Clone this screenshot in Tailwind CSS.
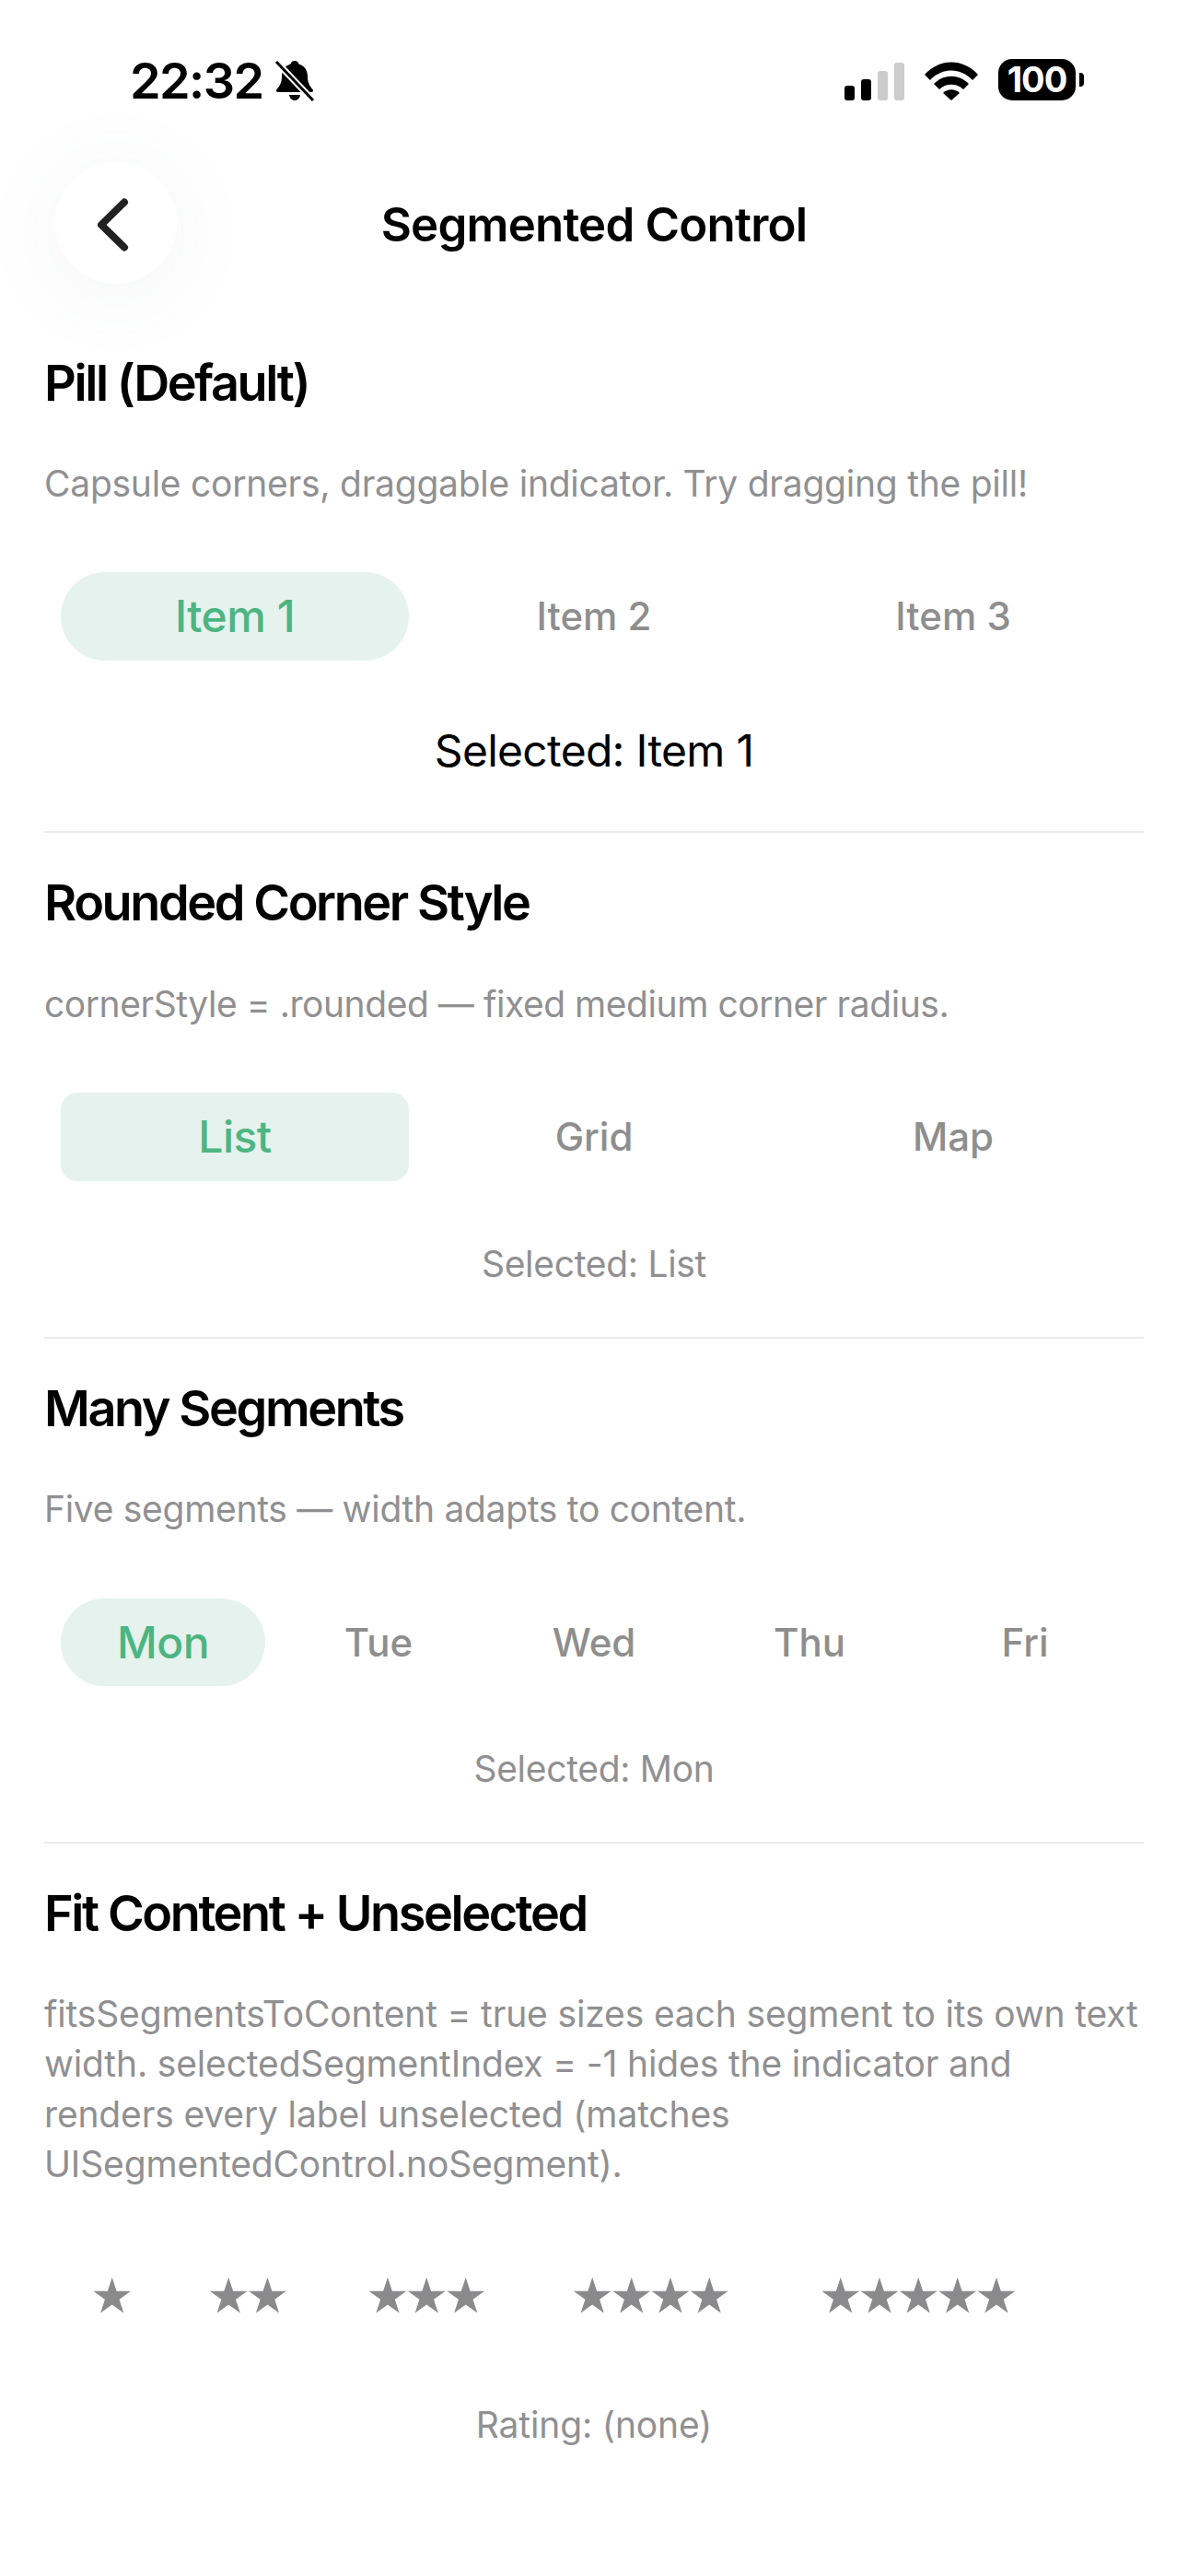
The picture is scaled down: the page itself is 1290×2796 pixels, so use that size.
<!DOCTYPE html>
<html lang="en">
<head>
  <meta charset="UTF-8" />
  <title>Segmented Control</title>
  <meta name="viewport" content="width=device-width, initial-scale=1.0"/>
  <script src="https://cdn.jsdelivr.net/npm/@tailwindcss/browser@4"></script>
</head>
<body class="bg-white text-black font-['Inter','Liberation_Sans',sans-serif] w-[1290px] h-[2796px] overflow-hidden">
  <!-- status bar -->
  <div class="h-[176px] relative">
    <div class="flex items-start justify-between pl-[141px] pr-[113px] pt-[56px]">
      <div class="flex items-center gap-[12px] h-[64px]">
        <span class="text-[54px] leading-[64px] font-semibold tracking-[-1.6px]">22:32</span>
        <svg class="w-[44px] h-[46px]" viewBox="0 0 44 46">
          <path d="M22 1c2.500 0 4 1.800 4.500 3.500C33 6.500 36 11.500 36 18c0 7 2.500 10.500 5.500 14 1 1.200.500 3-1.500 3H4c-2 0-2.500-1.800-1.500-3C5.500 28.500 8 25 8 18c0-6.500 3-11.500 9.500-13.500C18 2.800 19.500 1 22 1z" />
          <path d="M16 38h12c-.5 3.500-3 6-6 6s-5.500-2.500-6-6z" />
          <path d="M2 2l40 42" stroke="#fff" stroke-width="7" />
          <path d="M2 2l40 42" stroke="#000" stroke-width="3" />
        </svg>
      </div>
      <div class="flex items-end gap-[22px] pt-[8px]">
        <div class="flex items-end gap-[7px] h-[41px]">
          <div class="w-[11px] h-[16px] rounded-[3px] bg-black"></div>
          <div class="w-[11px] h-[23px] rounded-[3px] bg-black"></div>
          <div class="w-[11px] h-[32px] rounded-[3px] bg-[#cccccc]"></div>
          <div class="w-[11px] h-[41px] rounded-[3px] bg-[#cccccc]"></div>
        </div>
        <svg class="w-[58px] h-[42px]" viewBox="0 0 58 42">
          <path d="M0 14C16-4 42-4 58 14l-6 6C39 6 19 6 6 20z" />
          <path d="M10 24c11-11 27-11 38 0l-6 6c-7-7-19-7-26 0z" />
          <path d="M20 34c5-5 13-5 18 0l-9 8z" />
        </svg>
        <div class="flex items-center gap-[4px]">
          <div class="w-[84px] h-[45px] rounded-[15px] bg-black text-white text-[38px] leading-[45px] font-bold text-center tracking-[-1px]">100</div>
          <div class="w-[5px] h-[15px] rounded-r-[4px] bg-black"></div>
        </div>
      </div>
    </div>
  </div>

  <!-- nav bar -->
  <div class="relative h-[132px] flex items-center justify-center">
    <div class="absolute left-[60px] top-0 w-[132px] h-[132px] rounded-full bg-white shadow-[0_10px_90px_rgba(80,120,105,0.08)] flex items-center justify-center">
      <svg class="w-[36px] h-[60px] mr-[7px] mt-[3px]" viewBox="0 0 36 60" fill="none" stroke="#222224" stroke-width="8" stroke-linecap="round" stroke-linejoin="round">
        <path d="M30 5.500L5 30l25 24.500" />
      </svg>
    </div>
    <h1 class="pt-[3px] text-[51px] leading-[60px] font-semibold tracking-[-0.8px]">Segmented Control</h1>
  </div>

  <main class="px-[48px] pt-[72px]">
    <!-- pill -->
    <section class="h-[524px] border-b-[2px] border-[#eaeaec]">
      <h2 class="text-[54px] leading-[72px] font-semibold tracking-[-2.4px]">Pill (Default)</h2>
      <p class="mt-[46px] text-[39px] leading-[54px] tracking-[-0.25px] text-[#909092]">Capsule corners, draggable indicator. Try dragging the pill!</p>
      <div class="mt-[69px] px-[18px] grid grid-cols-3 gap-[12px] text-[42px] font-medium text-center leading-[96px] text-[#8e8e8e]">
        <div class="rounded-full bg-[#e5f2ed] text-[48px] tracking-[-0.5px] text-[#4cb582]">Item 1</div>
        <div>Item 2</div>
        <div>Item 3</div>
      </div>
      <p class="mt-[68px] text-[48px] leading-[60px] tracking-[-0.7px] text-center">Selected: Item 1</p>
    </section>

    <!-- rounded -->
    <section class="h-[549px] pt-[40px] border-b-[2px] border-[#eaeaec]">
      <h2 class="text-[54px] leading-[72px] font-semibold tracking-[-2.4px]">Rounded Corner Style</h2>
      <p class="mt-[47px] text-[39px] leading-[54px] tracking-[-0.45px] text-[#909092]">cornerStyle = .rounded — fixed medium corner radius.</p>
      <div class="mt-[69px] px-[18px] grid grid-cols-3 gap-[12px] text-[42px] font-medium text-center leading-[96px] text-[#8e8e8e]">
        <div class="rounded-[18px] bg-[#e5f2ed] text-[48px] tracking-[-0.5px] text-[#4cb582]">List</div>
        <div>Grid</div>
        <div>Map</div>
      </div>
      <p class="mt-[63px] text-[39px] leading-[54px] tracking-[-0.3px] text-center text-[#909092]">Selected: List</p>
    </section>

    <!-- many -->
    <section class="h-[548px] pt-[40px] border-b-[2px] border-[#eaeaec]">
      <h2 class="text-[54px] leading-[72px] font-semibold tracking-[-2.4px]">Many Segments</h2>
      <p class="mt-[46px] text-[39px] leading-[54px] tracking-[-0.3px] text-[#909092]">Five segments — width adapts to content.</p>
      <div class="mt-[70px] px-[18px] grid grid-cols-5 gap-[12px] text-[42px] font-medium text-center leading-[95px] text-[#8e8e8e]">
        <div class="rounded-full bg-[#e5f2ed] text-[48px] tracking-[-0.5px] text-[#4cb582]">Mon</div>
        <div>Tue</div>
        <div>Wed</div>
        <div>Thu</div>
        <div>Fri</div>
      </div>
      <p class="mt-[63px] text-[39px] leading-[54px] tracking-[-0.3px] text-center text-[#909092]">Selected: Mon</p>
    </section>

    <!-- fit content -->
    <section class="pt-[40px]">
      <h2 class="text-[54px] leading-[72px] font-semibold tracking-[-2.4px]">Fit Content + Unselected</h2>
      <p class="mt-[46px] text-[39px] leading-[54.4px] tracking-[-0.15px] text-[#909092]">fitsSegmentsToContent = true sizes each segment to its own text<br>width. selectedSegmentIndex = -1 hides the indicator and<br>renders every label unselected (matches<br>UISegmentedControl.noSegment).</p>
      <div class="mt-[69px] h-[96px] pl-[18px] flex gap-[12px] font-['DejaVu_Sans',sans-serif] text-[49px] leading-[93px] tracking-[-1.6px] text-center text-[#8a8a8c] [-webkit-text-stroke:1px_#8a8a8c]">
        <div class="w-[110px]">★</div>
        <div class="w-[161px]">★★</div>
        <div class="w-[203px]">★★★</div>
        <div class="w-[260px]">★★★★</div>
        <div class="w-[297px]">★★★★★</div>
      </div>
      <p class="mt-[63px] text-[39px] leading-[54px] tracking-[-0.15px] text-center text-[#909092]">Rating: (none)</p>
    </section>
  </main>
</body>
</html>
